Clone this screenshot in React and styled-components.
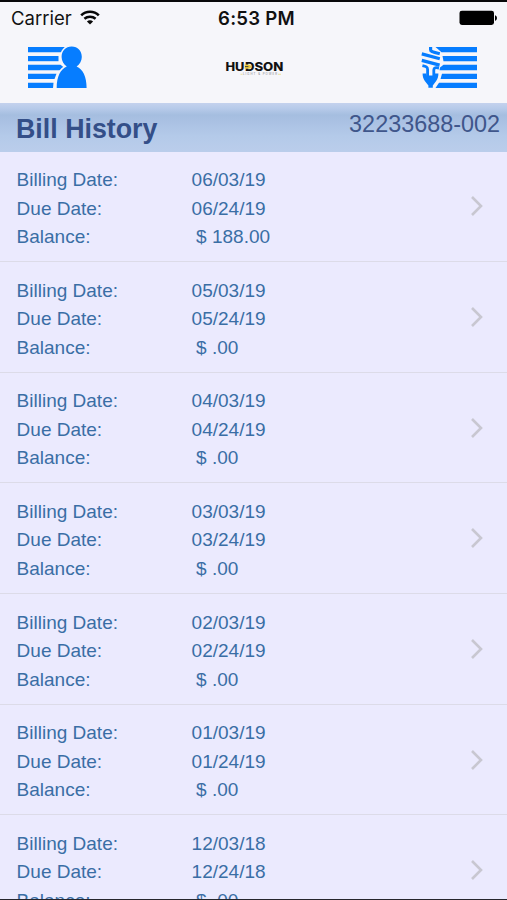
import React from "react";
import styled, { createGlobalStyle } from "styled-components";

const bills = [
  { billed: "06/03/19", due: "06/24/19", balance: "188.00" },
  { billed: "05/03/19", due: "05/24/19", balance: ".00" },
  { billed: "04/03/19", due: "04/24/19", balance: ".00" },
  { billed: "03/03/19", due: "03/24/19", balance: ".00" },
  { billed: "02/03/19", due: "02/24/19", balance: ".00" },
  { billed: "01/03/19", due: "01/24/19", balance: ".00" },
  { billed: "12/03/18", due: "12/24/18", balance: ".00" },
];

const WifiIcon = () => (
  <svg width="20" height="16" viewBox="0 0 20 16" fill="none" stroke="#080808">
    <path d="M1.2 5.4 C6 0.6 14 0.6 18.8 5.4" strokeWidth="2.6" />
    <path d="M4.4 8.8 C7.6 5.9 12.4 5.9 15.6 8.8" strokeWidth="2.5" />
    <path d="M10 14.6 L6.9 11.4 C8.6 9.8 11.4 9.8 13.1 11.4 Z" fill="#080808" stroke="none" />
  </svg>
);

const BatteryIcon = () => (
  <svg width="39" height="16" viewBox="0 0 39 16">
    <rect x="0.5" y="0.7" width="34.5" height="14.3" rx="2.4" />
    <path d="M36 5.2 C38.6 5.8 38.6 10.2 36 10.8 Z" />
  </svg>
);

const AccountIcon = () => (
  <svg width="60" height="44" viewBox="0 0 60 44" fill="#067dff">
    <path d="M0 1 H37 L34 6.2 H0 Z" />
    <path d="M0 10 H30.5 V15.2 H0 Z" />
    <path d="M0 18.8 H32.5 L36 21.4 L32 24.2 H0 Z" />
    <path d="M0 27.8 H28.5 L26.5 33 H0 Z" />
    <path d="M0 36.7 H25.5 L25 42 H0 Z" />
    <path
      d="M43.7 0.6 C49.8 0.6 53.8 5.2 53.8 11 C53.8 15 51.6 18.2 48.6 20.6 C55 23.2 58.6 31 58.6 42 H28.7 C28.7 31 32.4 23.2 38.8 20.6 C35.8 18.2 33.6 15 33.6 11 C33.6 5.2 37.6 0.6 43.7 0.6 Z"
      stroke="#f6f6fa"
      strokeWidth="3"
      paintOrder="stroke"
    />
  </svg>
);

const BulbIcon = () => (
  <svg width="57" height="44" viewBox="0 0 57 44" fill="#067dff">
    <path d="M14.5 1 H56 V6.2 H20.5 Z" />
    <path d="M21.5 10 H56 V15.2 H22.5 Z" />
    <path d="M22.5 18.8 H56 V24.2 H18.5 L19 21.4 Z" />
    <path d="M21 27.8 H56 V33 H19.5 Z" />
    <path d="M18 36.7 H56 V42 H14.5 Z" />
    <g fill="none" stroke="#067dff" strokeWidth="3.2">
      <path d="M9.6 1 V3.8 C9.6 5.6 11.5 5.9 18.8 7.8" />
      <path d="M0.8 7.9 L18.8 12.7" />
      <path d="M0.8 14.4 L18.6 19.1" />
    </g>
    <g fill="none" stroke="#067dff" strokeWidth="2.8">
      <path d="M1.4 19.6 C5 20.4 6.6 21 6.6 23.6 V30" />
      <path d="M18 22 C14.6 21.4 12.8 21.4 12.8 24 V30" />
    </g>
    <path d="M1.6 27.6 H5.4 V29.4 H14 V27.6 H17.4 C17.4 31 16.6 33 15 35.2 L11.8 39.6 V41.8 H7.4 V39.6 L4 35.2 C2.4 33 1.6 31 1.6 27.6 Z" />
  </svg>
);

const Logo = () => (
  <svg width="60" height="20" viewBox="0 0 60 20">
    <g fontFamily="Inter, sans-serif" fontWeight="800" fontSize="11.6" fill="#111">
      <text x="0.4" y="12.8" textLength="19" lengthAdjust="spacingAndGlyphs">HU</text>
      <text x="20" y="12.8" textLength="9.5" lengthAdjust="spacingAndGlyphs">D</text>
      <text x="29.4" y="12.8" textLength="29" lengthAdjust="spacingAndGlyphs">SON</text>
    </g>
    <path d="M19.6 6.5 H23.5 C27 6.6 27 10.7 23.5 10.8 H19.6 Z" fill="#e9c93f" />
    <path d="M20 8.6 H23.4" stroke="#333" strokeWidth="0.9" />
    <text
      x="18"
      y="17.2"
      textLength="34"
      fontFamily="Inter, sans-serif"
      fontSize="2.8"
      fill="#85858b"
    >
      LIGHT &amp; POWER
    </text>
    <path d="M15.5 16.3 H17.5 M53 16.3 H56" stroke="#e8dc8c" strokeWidth="0.8" />
  </svg>
);

const App = () => {
  return (
    <Screen>
      <GlobalStyle />
      <StatusBar>
        <Carrier>
          Carrier
          <WifiIcon />
        </Carrier>
        <Clock>6:53 PM</Clock>
        <Battery>
          <BatteryIcon />
        </Battery>
      </StatusBar>
      <NavBar>
        <NavButton aria-label="Account">
          <AccountIcon />
        </NavButton>
        <Logo />
        <NavButton aria-label="Usage">
          <BulbIcon />
        </NavButton>
      </NavBar>
      <TitleBar>
        <Title>Bill History</Title>
        <AccountNumber>32233688-002</AccountNumber>
      </TitleBar>
      <BillList>
        {bills.map((bill) => (
          <BillRow key={bill.billed}>
            <Details>
              <dt>Billing Date:</dt>
              <Value>{bill.billed}</Value>
              <dt>Due Date:</dt>
              <Value>{bill.due}</Value>
              <dt>Balance:</dt>
              <Value $indent>$ {bill.balance}</Value>
            </Details>
            <Chevron viewBox="0 0 14 22">
              <path d="M2 2 L11 11 L2 20" />
            </Chevron>
          </BillRow>
        ))}
      </BillList>
    </Screen>
  );
};

const GlobalStyle = createGlobalStyle`
  body {
    margin: 0;
    overflow: hidden;
  }
`;

const Screen = styled.div`
  display: flex;
  flex-direction: column;
  box-sizing: border-box;
  width: 507px;
  height: 900px;
  overflow: hidden;
  border-top: 2px solid #08080a;
  border-bottom: 1px solid #26262c;
  background: #ebeafe;
  font-family: "Liberation Sans", Arial, sans-serif;
`;

const StatusBar = styled.div`
  display: grid;
  grid-template-columns: 1fr auto 1fr;
  align-items: center;
  flex: none;
  height: 32px;
  padding: 0 9px 0 11px;
  background: #f6f6fa;
  color: #111;
  font-family: Inter, sans-serif;
  font-size: 18.5px;
`;

const Carrier = styled.div`
  display: flex;
  align-items: center;
  gap: 8px;
`;

const Clock = styled.div`
  padding-left: 4px;
  font-size: 18.6px;
  font-weight: 600;
  letter-spacing: 0.25px;
`;

const Battery = styled.div`
  display: flex;
  justify-content: flex-end;
`;

const NavBar = styled.div`
  display: flex;
  align-items: center;
  justify-content: space-between;
  flex: none;
  box-sizing: border-box;
  height: 69px;
  padding: 0 29px 2px 28px;
  background: #f6f6fa;
`;

const NavButton = styled.button`
  display: flex;
  padding: 0;
  border: 0;
  background: none;
`;

const TitleBar = styled.div`
  display: flex;
  justify-content: space-between;
  flex: none;
  box-sizing: border-box;
  height: 48.5px;
  padding: 0 7px 0 16px;
  background: linear-gradient(
    #c4d2ed 0,
    #b8cbea 5px,
    #a5bee0 12px,
    #abc2e4 20px,
    #b4cae9 33px,
    #bacdeb 48px
  );
  color: #344f88;
`;

const Title = styled.h1`
  margin: 0;
  font-size: 26.8px;
  line-height: 52px;
`;

const AccountNumber = styled.div`
  color: #3f568b;
  font-size: 23.4px;
  line-height: 42px;
`;

const BillList = styled.div`
  flex: 1;
  overflow: hidden;
`;

const BillRow = styled.div`
  display: flex;
  align-items: center;
  justify-content: space-between;
  box-sizing: border-box;
  height: 110.67px;
  padding: 0 23px 0 16.6px;
  border-bottom: 1px solid #dcdbe8;
`;

const Details = styled.dl`
  display: grid;
  grid-template-columns: 175px auto;
  margin: 4.8px 0 0;
  color: #3a6ea5;
  font-size: 19px;
  line-height: 28.4px;
`;

const Value = styled.dd`
  margin: 0;
  padding-left: ${(props) => (props.$indent ? "4.5px" : "0")};
`;

const Chevron = styled.svg`
  width: 14px;
  height: 22px;
  fill: none;
  stroke: #c8c7d1;
  stroke-width: 2.6px;
`;

export default App;
